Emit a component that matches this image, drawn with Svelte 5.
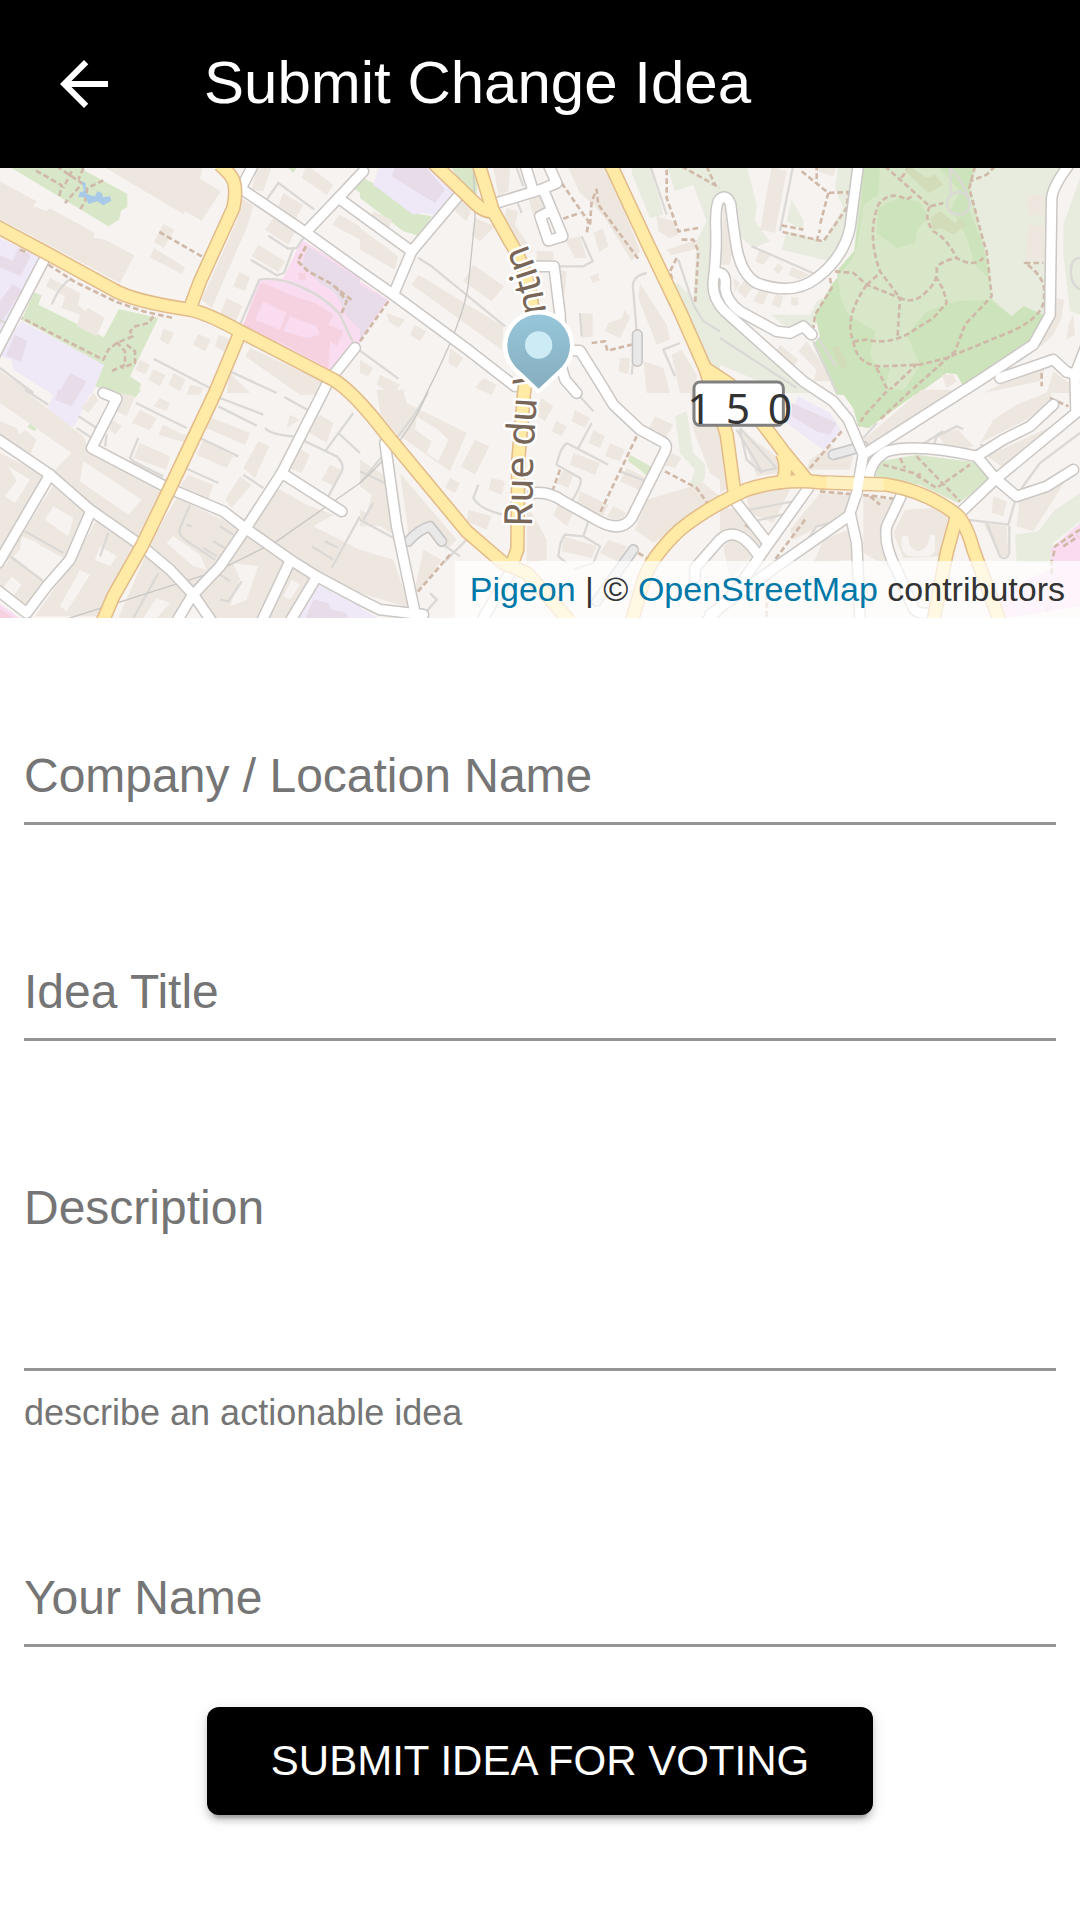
<script lang="ts">
  let company = "";
  let title = "";
  let description = "";
  let author = "";

  // the map is split in six tiles, three across and two down
  const tiles = [
    {
      x: 0,
      y: 0,
      park: "M60 -10L35 0L325 175L357 155L364 127L382 117V78L255 8L240 -10ZM102 373L125 382L115 410L312 508L357 423L475 450L390 625L424 648L410 680H360L285 655L310 590L65 455ZM855 -10L880 15L895 -10ZM1060 60L1080 45V75Z",
      wood: "",
      lawn: "",
      school: "M-5 208L125 270L0 510ZM65 460L312 590L275 680H160L40 605L35 575L0 565V540Z",
      schoolBlock: "M-5 260L38 278L55 240L92 262L62 325L-5 295ZM38 348L65 365L0 470V400ZM45 500L82 520L62 582L18 562ZM210 615L258 640L240 680H175Z",
      pink: "M905 215L1080 325V540L985 610L730 475L775 340L850 330Z",
      pinkBlock: "M790 345L880 385L945 405L1000 440L985 470L1030 490L1010 535L990 520L985 600L845 525L725 480L780 350ZM895 315h22v20h-22z",
      block: "M300 -10L550 138L555 130L605 158L662 70L600 32L610 -10ZM0 40L110 100L100 115L140 130L148 120L285 195L280 210L315 215L403 262L360 345L70 190L0 155ZM490 168L523 185L492 240L462 222ZM462 240L555 298L545 318L450 268ZM725 90L760 115L740 180L635 420L605 395L710 160ZM770 0L815 -5L790 70L755 65ZM850 75L910 112L885 155L835 115ZM825 145L888 185L865 230L795 185ZM775 230L855 280L835 312L755 265ZM718 312L750 328L735 370L700 355ZM680 390L728 415L705 465L660 440ZM920 -10L1000 50L980 80L905 30ZM1018 140L1080 175V215L998 170ZM150 330L240 375L235 410L255 430L265 420L314 450L290 505L230 475L240 440L185 420L195 385L137 355ZM490 482L522 495L505 530L480 515ZM595 498L632 515L615 550L580 530ZM655 500L705 520L690 560L645 535ZM420 575L450 590L435 620L405 605ZM460 603L497 620L480 655L445 635ZM520 615L557 635L540 670L505 650ZM570 650L610 660L600 680H560ZM750 540L980 645L960 680H900L735 565ZM690 615L750 675H680ZM0 610L80 660L90 680H0Z",
      pinkYard: "M790 400L860 435L840 485L765 455ZM870 445L950 475L960 500L920 510L850 490Z",
      service: "M800 95L835 45L943 125M805 203L865 242L890 240L910 210M752 275L830 322L852 315L880 240M720 470L778 335Q830 325 900 355Q980 390 1020 440L1060 525M0 455L15 465M155 410Q180 350 215 330M462 573L640 665M690 610L830 675M0 600L100 675",
      foot: "M108 8L185 52L178 85M170 -5L245 45L235 60L195 105M215 10L190 60M250 0L235 35M310 37L262 60L255 100L240 125M478 192L610 268M60 245L85 255M145 290L225 342L350 402L430 430L520 450M460 445L445 465L405 475L390 490L398 505L350 525L325 545L310 575L65 450M350 522L375 550V590L330 612M380 530L405 550V585L365 600M918 235L893 280L925 310L990 345L1060 400M1005 355L1040 400L1025 435",
    },
    {
      x: 1080,
      y: 0,
      park: "M0 25L95 75L155 135L215 145L180 205L130 190L0 90ZM270 -10H355L350 85L290 25Z",
      wood: "",
      lawn: "M815 -10H1080V540L1010 430L950 340L1000 400L1010 220L1040 160L1000 50L945 70L920 -10L870 -10L910 140L870 150L815 15ZM950 345L1000 390L1080 500V610L1050 590L940 360Z",
      school: "M60 -10H235L300 70L240 145L190 135L160 140L40 50Z",
      schoolBlock: "M110 -10L195 -5L255 65L225 105L95 25ZM0 350L80 395L0 515Z",
      pink: "M0 340L85 395L0 520Z",
      pinkBlock: "",
      block: "M0 180L115 265L105 305L0 245ZM40 130L95 155L85 190L30 165ZM175 320L430 475L425 545L155 350ZM340 290L432 355L395 400L310 340ZM345 150L405 175L360 220L335 200ZM300 90L340 110L320 160L285 130ZM400 -5L450 0L445 70L415 85ZM440 120L475 130L465 170L520 250L480 260L430 160ZM505 90L540 80L560 120L520 145ZM530 250H580V275L530 280ZM615 215L660 205L680 270L645 270ZM700 195L728 182L745 235L718 252ZM690 325L715 315L718 338L698 345ZM665 435L698 438V505L665 510ZM745 465L785 450L795 425L810 450L780 510L735 490ZM620 -10H740L840 250L815 280L735 150L700 110L660 75ZM840 345L920 470L930 515L890 530L835 390ZM890 145L940 160L955 200L930 210L895 190ZM920 245L1010 215L1020 240L935 262ZM780 570H810L805 620L775 610ZM850 580L910 600L930 675H860ZM935 560L965 545L1010 620V675H960ZM80 435L135 455L115 480L85 460ZM165 470L200 490L180 520L150 500ZM270 540L310 570L290 600L265 585ZM60 620L120 650L100 680L50 650ZM370 630L410 650L395 680L345 660ZM0 575L40 600L25 625L0 615ZM590 305L620 310L615 375L595 370Z",
      pinkYard: "",
      service: "M175 270L215 295L435 475M0 548L115 632M665 205L698 280L670 295H600M660 435L665 505M860 315Q810 325 820 370L830 490L815 620M960 525L910 545L945 625M870 -10L920 140M955 275L1000 410L1030 460L1080 490M470 0L490 55M465 85L485 135",
      foot: "M605 45L685 160L680 200M610 152L660 135M690 170L695 100L710 65L715 110L840 280M920 5V90L955 190L1015 180M965 215H1000L1015 250L1005 410M950 270L930 310L940 350M695 525L735 520L742 548L815 530M85 400L0 520M965 -5L1080 60M1040 -5L1065 50",
    },
    {
      x: 2160,
      y: 0,
      park: "M430 -10H770L750 60L810 300L815 390L875 445L910 415L970 440L935 530L730 655L710 618L680 615L590 680H350L280 530L300 505L285 440L335 350L400 270Z",
      wood: "M430 -10H480L475 80L430 110L410 240L350 310L365 400L385 440L465 490L450 560L470 600L510 600L490 680H350L280 530L300 505L285 440L335 350L400 270L425 100ZM545 85L600 105L625 145L590 190L585 225L530 240L470 195L475 120ZM650 -10H760L745 120L790 235L805 330L765 290L740 210L710 150L690 130L720 70ZM710 400L810 395L875 445L910 415L970 440L935 530L730 655L710 618L680 615L590 680H545L600 590L560 500L620 430Z",
      lawn: "M-5 -10H80L110 110L105 160L150 220L100 240L30 180L0 80ZM355 -10H410L385 180L330 280L185 245L200 190L310 220L370 120L345 60ZM215 95L250 155V185L200 160ZM755 -10H1050L1000 50L980 400L970 440L910 415L875 445L815 390L805 280L750 110ZM0 430L270 640L340 675H200L0 590ZM155 440L270 440L290 400L310 390L280 490L200 480ZM1080 30L1030 170V260L1050 430L1080 440Z",
      school: "",
      schoolBlock: "",
      pink: "",
      pinkBlock: "",
      block: "M155 -5L200 10L165 195L120 185ZM10 100L35 260L30 290L5 290ZM120 245L150 265L130 290L105 280ZM175 285L190 300L175 318L160 305ZM215 298L270 320L240 335L205 322ZM115 368L145 375L130 410L100 400ZM168 378L190 385L180 420L155 410ZM213 388H235V412H213ZM80 330L105 350L75 390L50 365ZM40 330L60 345L45 370ZM180 530L235 575L220 595L165 555ZM235 550L260 520L310 590L330 640L280 640L290 605ZM295 -10H350L340 25L290 10ZM920 82L972 80V142H925ZM925 170L975 172L970 285L945 275L915 285ZM1010 390L1032 395L1025 450L1000 500L970 530L940 545ZM1045 470L1060 440L1065 500L1040 515ZM665 620L700 620L710 640L680 660ZM1000 610L1055 650V675H980ZM860 640L975 600L960 640L790 675Z",
      pinkYard: "",
      service: "M220 -10L180 190M95 235L285 318M690 0L692 75M690 0Q735 45 748 100M715 72a34 34 0 1 0 1 0M1080 270Q1050 270 1053 320Q1055 350 1080 365M280 520L350 675M295 510L348 595M0 510L230 660",
      foot: "M245 10L325 75L385 72L380 120L310 220L180 190M290 -10V45M325 75L300 170M185 172L250 185M290 220L300 185M495 -5L630 115L670 105M575 85L560 95Q510 65 475 110Q440 200 480 310L540 390Q585 410 620 370Q655 340 650 300Q660 280 710 270M630 115Q610 150 640 190Q680 210 710 270Q760 300 790 270M570 -5L540 35M765 -5L748 60L790 220L800 250L815 385L735 470L705 550L560 680M825 -5L800 20L750 40M345 310L400 315L440 350L540 390L532 515M440 350L485 310M440 350Q370 450 400 520L440 515Q500 530 560 500L640 450L680 405L670 365L650 330M400 520Q410 590 480 595L600 590L680 570L850 500Q980 450 972 380Q980 330 915 285L970 285M470 600L505 670L600 580M330 330L335 360L285 440L280 480M965 615V655",
    },
    {
      x: 0,
      y: 675,
      park: "M365 -10H424L405 15L350 5ZM92 90L110 105L105 115L82 102Z",
      wood: "",
      lawn: "",
      school: "M165 -10H275L225 98L205 100L140 55ZM955 575L1080 640V680H890Z",
      schoolBlock: "M175 -10H245L215 40L165 20ZM940 620L985 630L995 650L1040 660L1045 680H915Z",
      pink: "M-5 630L65 680H-5Z",
      pinkBlock: "M-5 645L50 680H-5Z",
      block: "M0 -10H70L250 130L265 165L490 290L415 440L270 335L155 240L215 180L0 30ZM0 85L50 105L60 125L75 110L110 140L85 195L0 140ZM0 180L140 250L130 290L0 510ZM170 260L265 345L200 500L90 440L40 490L5 520ZM0 530L40 490L145 570L70 645L0 590ZM290 380L415 460L430 480L310 670H105L220 505ZM530 315L730 410L590 600L520 520L440 465ZM440 480L515 545L570 610L540 675H355ZM740 425L860 505L780 675H640L590 625ZM880 510L940 560L875 675H805ZM815 275L920 335L1000 365L940 400L1080 470V605L755 415ZM895 165L930 185L905 240L865 225ZM990 215L1022 230L1000 280L965 260ZM775 145L808 160L765 255L730 225ZM610 140L700 190L680 225L590 185ZM600 60L750 120L735 155L595 95ZM420 50L470 75L450 112L395 90ZM490 95L550 125L575 120L560 150L475 125ZM420 150L510 190L500 230L400 195ZM565 245L640 275L625 320L540 280ZM720 250L755 275L695 345L675 320ZM480 15L510 30L500 55L460 40ZM340 80L365 100L345 125L325 105ZM280 0L295 20L265 60L245 45ZM960 65L1000 90L980 150L915 110ZM870 65L900 80L860 105ZM360 0L405 10L380 70L350 55Z",
      pinkYard: "",
      yard: "M250 205L240 265L385 365L425 320ZM25 220L90 260L45 330L15 310L50 265ZM160 340L220 375L205 430L135 380ZM65 430L115 450L80 495L60 470ZM35 550L65 575L40 610L10 585ZM520 430L600 485L620 530L580 520L500 450ZM300 460L350 490L330 520L285 500ZM240 530L270 545L200 655L180 640ZM470 615L510 630L470 675H430ZM700 510L775 520L740 620L690 640L720 560ZM875 560L900 575L870 620L850 610Z",
      service: "M408 30L560 105M600 135L715 190M655 40L770 98M660 15L790 65M853 12L930 55M235 70L290 105M230 105L290 145M415 135L390 195L400 205L490 250M555 225L655 270M730 245L790 285M795 105Q810 125 880 130M905 140L1010 190Q1035 215 1025 235L985 310M1060 60L975 175M1015 120L1080 180M570 335L540 405Q535 425 555 440L645 500M660 400L700 425M640 445L690 475M610 465L650 490M935 460L1000 500M975 445L1015 465M1080 370L995 525M75 415L190 480M30 490L130 565M325 420L300 490M475 540L400 675M660 620L685 625L725 565M640 530L690 565M320 125L315 160M75 -10L145 35M560 395L575 400",
      foot: "",
    },
    {
      x: 1080,
      y: 675,
      park: "M810 185L880 225L865 255L845 235L805 205Z",
      wood: "",
      lawn: "M945 70L980 55L1000 180L1035 215V250L1020 285L990 275L1005 230L960 180Z",
      school: "M-5 640L60 680H-5Z",
      schoolBlock: "",
      pink: "",
      pinkBlock: "",
      block: "M50 -10H130L140 30L320 120L270 235L100 115L60 60ZM345 140L388 160L345 245L303 220ZM270 255L300 270L285 300L255 285ZM0 200L70 245L60 190L85 280L110 430L60 400L0 400ZM120 240L290 440L260 470L205 385L145 420ZM0 470L100 500L150 645L0 600ZM395 255L435 265L425 305L385 290ZM325 350L395 370L380 410L320 385ZM190 470L245 500L205 560L160 610ZM545 15L580 40L555 85L525 65ZM590 85L620 100L605 130L575 115ZM645 50L690 75L675 105L635 85ZM700 110L735 130L720 165L685 150ZM750 150L795 170L780 205L735 190ZM640 180L720 210L705 245L630 215ZM800 225L860 255L845 295L780 265ZM660 295L745 335L730 370L650 330ZM610 230L640 245L625 285L590 270ZM610 430L710 460L695 495L605 475ZM745 440L800 460L780 510L720 480ZM885 70L940 95L910 145L855 125ZM915 170L965 195L945 225L905 215ZM760 340L800 360L780 385L740 370ZM860 320L1030 270L1080 310L880 450L825 410ZM990 0H1080V260L1050 240L1000 110ZM500 330L560 440V500L500 510ZM600 325L645 350L620 400L580 365Z",
      pinkYard: "",
      yard: "M170 70L235 110L265 140L235 205L200 180L215 145L165 110ZM0 280L35 305L20 360L0 350Z",
      service: "M355 275L340 315Q360 350 430 365M205 -5Q170 70 0 270M0 235L75 270M40 330L10 380M0 380L110 440M320 440L255 505M695 90L655 165M620 150L745 215M620 150Q600 165 590 215L660 255Q670 270 635 325M780 235L860 265M690 370L670 430L720 460L700 510L640 530M670 430L615 425Q600 440 595 490L620 510M655 5L700 55M250 455L300 490M210 600L230 620L195 660",
      foot: "M830 130L715 370M600 230L575 300M915 235L1010 285L1045 335M270 485L170 600M835 480L860 495",
    },
    {
      x: 2160,
      y: 675,
      park: "M465 255L480 205L590 185L780 210L825 255L715 330L600 275ZM360 -10H605L445 105L415 100L400 45Z",
      wood: "M360 -10H605L445 105L415 100L400 45Z",
      lawn: "M1080 300V385L1000 450L990 510H890L885 425L955 415L1000 355Z",
      school: "M235 10L330 60L365 115L310 170L200 90Z",
      schoolBlock: "M215 30L350 90L330 125L290 115L215 70Z",
      pink: "M1080 390V640L830 680L850 590L990 530L995 465Z",
      pinkBlock: "M970 640L990 630L1000 650L980 660Z",
      block: "M605 -10H740L450 165L430 140ZM650 120L715 110L760 160L690 180ZM440 180L480 190L450 260L430 250ZM780 150L820 80L850 60L890 35L990 -5L1000 25L900 90ZM1015 90L1040 100L860 230L800 190ZM430 310L530 320L495 400L520 530L430 480ZM555 350L640 345L700 380L670 490L550 495L520 420ZM790 390L860 400L865 490L840 490ZM820 310L860 325L850 370L815 360ZM900 300L1010 250L1035 265L940 415L890 400ZM75 290L210 290L160 390L90 360ZM0 340L45 350L130 450L90 470L0 420ZM10 460L50 430L95 490L30 560ZM270 200L330 160L400 190L390 230L260 230ZM60 110L170 190L180 240L110 250ZM0 100L30 280L0 300ZM300 300L390 300L380 360L220 440L210 410ZM310 440L385 410L400 500L280 510Z",
      pinkYard: "",
      yard: "M545 430H565Q565 470 595 475Q625 470 630 425H645V470Q640 495 595 490Q550 495 545 460Z",
      service: "M50 110L125 235L170 225L60 105M60 110L80 200L125 240M90 350L220 325M100 385L210 360M640 160L650 130L710 100L730 108M590 165L670 115M800 160L780 155M740 380L865 395L895 290M800 390L840 490Q860 505 868 480V400M905 285L960 210L1080 120M430 135L470 90M245 465L290 400L330 390",
      foot: "M500 -5L440 60L415 95M570 -5L480 80M365 115L270 225M255 380L165 500M490 215L580 240L650 285L750 215M590 190L720 325M540 195L555 225M600 240L590 265M300 295L470 310L540 320M450 310L480 335M1000 490L1005 460L1080 410M1030 460L1075 430M990 15L1045 40M75 395L90 405M140 550V675M995 500V550",
    },
  ];

  const streets = [
    "M720 60L920 195L1080 310L1180 380L1410 550L1545 655",
    "M730 48L765 -20",
    "M920 190L1015 90L1090 10",
    "M1015 90L1090 145L1235 250",
    "M1370 90L1235 250L1180 380",
    "M130 280L0 530L-20 570",
    "M1065 540L985 640L965 680L845 915L735 1085L660 1195L575 1285L530 1360",
    "M310 675L350 692L275 840L500 958L670 1030L735 1080L870 1175L950 1225L1080 1295L1140 1325L1270 1340",
    "M-10 812L150 920L270 1025L420 1130L510 1205L580 1280L635 1360",
    "M150 920L-5 1185",
    "M270 1035L210 1175L140 1255L80 1335L-10 1265",
    "M845 915L1025 1030",
    "M870 1180L785 1360",
    "M945 1235L870 1360",
    "M1155 825L1190 1075L1245 1335",
    "M1530 1215L1450 1350",
    "M1600 975Q1650 970 1690 1000L1780 1050Q1860 1100 1895 1050L1995 850Q2005 830 1985 820L1920 785L1840 710L1810 660L1740 548L1715 548",
    "M1600 295H1662L1680 440L1685 600L1695 635L1730 675",
    "M1490 105L1630 62L1670 45L1645 -10",
    "M1600 70L1575 -10",
    "M1630 65L1688 205L1645 218L1620 145L1650 130",
    "M2575 -10L2550 180Q2530 270 2450 330Q2380 385 2270 345Q2225 320 2210 240Q2200 180 2192 110Q2180 75 2158 95Q2145 110 2148 190Q2150 260 2140 340Q2135 390 2175 430L2410 640L2500 700L2545 755L2590 860L2570 975L2550 1035L2570 1125L2580 1350",
    "M2160 315Q2180 320 2175 360Q2180 400 2220 430L2330 490L2370 495L2410 475L2435 500",
    "M3215 -20Q3160 50 3155 90L3150 440L3100 530L2950 630L2590 860",
    "M3000 630L3160 575L3200 612L3250 625",
    "M3260 530L3225 620L3228 735L2985 935L2880 1035",
    "M2605 950Q2605 880 2660 850Q2750 825 2930 865L2985 930L3050 985L3140 955L3220 905",
    "M2930 865L3010 815L3090 775L3160 710",
    "M2425 960L2300 1135L2210 1265L2120 1360",
    "M2210 1005L2300 1120",
    "M2545 1045L2330 1195L2130 1340",
    "M2705 980L2660 1075Q2650 1130 2690 1205L2740 1320Q2750 1340 2800 1335",
    "M2085 1230L2085 1200L2160 1115Q2210 1070 2270 1155",
  ];

  const roads = [
    "M-20 170L130 250L340 365Q400 400 570 425Q620 435 720 490L1000 635Q1060 670 1160 800L1280 945L1400 1090L1510 1185L1580 1215L1710 1360",
    "M570 420L600 340L700 120Q715 50 690 20L660 -10",
    "M720 495L645 675L510 960L425 1135L340 1285L308 1360",
    "M1300 -15L1430 110Q1450 130 1480 132L1435 -15",
    "M1480 130L1530 220Q1600 330 1600 480L1572 675L1555 875L1552 1145L1535 1190",
    "M1830 -15L1930 200L2040 430L2115 600L2145 690L2180 800L2205 985",
    "M2115 600L2190 650L2290 770L2350 850L2420 935",
    "M2345 855Q2365 890 2350 935",
    "M1895 1360L1930 1240Q1950 1170 2040 1085Q2120 1020 2240 965Q2350 930 2460 943L2660 950Q2780 970 2870 1040Q2900 1070 2920 1145L3000 1360",
    "M2870 1045L2840 1155L2800 1360",
  ];

  const rails = [
    "M1420 -10L1425 150L1405 350Q1390 460 1280 675",
    "M210 1350L610 1222L680 1195L830 1120L1080 945Q1230 810 1280 675",
  ];

  const parkings = [
    "M1912 500V580",
    "M1900 1145L1790 1300",
    "M2500 860L2590 835",
    "M1225 1120Q1255 1085 1290 1075L1325 1120",
  ];
</script>

<header class="app-bar">
  <button class="back" type="button" aria-label="Back">
    <svg viewBox="0 0 24 24" aria-hidden="true">
      <path d="M20 11H7.83l5.59-5.59L12 4l-8 8 8 8 1.41-1.41L7.83 13H20v-2z" />
    </svg>
  </button>
  <h1>Submit Change Idea</h1>
</header>

<main>
  <section class="map" aria-label="Map">
    <svg class="canvas" viewBox="0 0 3240 1350" preserveAspectRatio="xMidYMid slice">
      <defs>
        <linearGradient id="pin" x1="0" y1="0" x2="0" y2="1">
          <stop offset="0" stop-color="#97c6da" />
          <stop offset="1" stop-color="#86aebf" />
        </linearGradient>
        <path id="valentin" d="M1596 1077L1600 850L1610 700Q1648 540 1638 430Q1625 320 1550 160" />
      </defs>

      {#each tiles as tile}
        <g transform="translate({tile.x} {tile.y})">
          <path d={tile.lawn} fill="#e7ecdf" />
          <path d={tile.park} fill="#d8e7c8" />
          <path d={tile.wood} fill="#cde3bb" />
          <path d={tile.school} fill="#eee8f7" />
          <path d={tile.pink} fill="#f9dcf0" />
          <path d={tile.block} fill="#eee7e0" />
          <path d={tile.yard ?? ""} fill="#f7f3f0" />
          <path d={tile.schoolBlock} fill="#e7dce7" />
          <path d={tile.pinkBlock} fill="#f6d1df" />
          <path d={tile.pinkYard} fill="#f9dcf0" />
          <path class="service" d={tile.service} />
          <path class="foot" d={tile.foot} />
        </g>
      {/each}

      <!-- park buildings, pond and clinic wing -->
      <path fill="#d3dcb9" d="M2730 -5L2780 30L2805 20L2830 50L2785 75L2715 10ZM2790 150L2820 130L2865 165L2880 150L2900 170L2860 200L2820 180L2800 190ZM2495 540L2515 530L2545 595L2525 605Z" />
      <path fill="#a9c9e8" d="M245 40L257 45V75L270 82L285 85L292 70L305 75L310 88L330 85L334 98L310 112L292 100L265 108L257 88L235 88L240 72L252 70Z" />
      <path fill="#e7dce7" d="M925 235L1080 335V485L1040 445L1020 400L1000 370L960 345L905 290Z" />
      <path class="foot" d="M918 235L893 280L925 310L990 345L1060 400M1005 355L1040 400L1025 435" />

      {#each rails as d}
        <path class="rail" {d} />
      {/each}

      {#each parkings as d}
        <path class="parking-case" {d} />
        <path class="parking" {d} />
      {/each}

      {#each streets as d}
        <path class="street-case" {d} />
      {/each}
      {#each streets as d}
        <path class="street" {d} />
      {/each}
      {#each roads as d}
        <path class="road-case" {d} />
      {/each}
      {#each roads as d}
        <path class="road" {d} />
      {/each}
      <path class="bridge" d="M2480 943L2650 950" />
      <path class="street" d="M2578 925L2570 980" />

      <text class="street-name"><textPath href="#valentin">Rue du Valentin</textPath></text>

      <rect class="shield" x="2082" y="642" width="268" height="130" rx="18" />
      <g class="shield-text">
        <text x="2098" y="768">1</text>
        <text x="2214" y="768">5</text>
        <text x="2340" y="768">0</text>
      </g>

      <path class="pin" d="M1616 662L1547 597A94 94 0 1 1 1685 597Z" />
      <circle cx="1616" cy="531" r="41" fill="#cdebf4" />
    </svg>

    <p class="attribution">
      <a href="https://pigeon-maps.js.org/">Pigeon</a> | © <a href="https://www.openstreetmap.org/copyright">OpenStreetMap</a> contributors
    </p>
  </section>

  <form on:submit|preventDefault>
    <div class="field" class:filled={company}>
      <label for="company">Company / Location Name</label>
      <input id="company" type="text" bind:value={company} />
    </div>

    <div class="field" class:filled={title}>
      <label for="title">Idea Title</label>
      <input id="title" type="text" bind:value={title} />
    </div>

    <div class="field" class:filled={description}>
      <label for="description">Description</label>
      <textarea id="description" rows="3" aria-describedby="description-help" bind:value={description}></textarea>
      <p id="description-help">describe an actionable idea</p>
    </div>

    <div class="field" class:filled={author}>
      <label for="author">Your Name</label>
      <input id="author" type="text" bind:value={author} />
    </div>

    <button class="submit" type="submit">SUBMIT IDEA FOR VOTING</button>
  </form>
</main>

<style>
  :global(body) {
    background: #fff;
    font-family: "Liberation Sans", Helvetica, Arial, sans-serif;
  }

  .app-bar {
    display: flex;
    align-items: center;
    gap: 48px;
    min-height: 168px;
    padding: 0 48px 0 12px;
    box-sizing: border-box;
    background: #000;
    color: #fff;
  }

  .back {
    display: flex;
    padding: 36px;
    border: 0;
    border-radius: 50%;
    background: none;
    color: inherit;
    cursor: pointer;
  }

  .back svg {
    width: 72px;
    height: 72px;
    fill: currentColor;
  }

  h1 {
    margin: 0;
    font-size: 60px;
    font-weight: 400;
    line-height: 94px;
    padding-bottom: 2px;
  }

  .map {
    position: relative;
    height: 450px;
    overflow: hidden;
    background: #f7f3f0;
  }

  .canvas {
    display: block;
    width: 100%;
    height: 100%;
  }

  .canvas path {
    stroke-linejoin: round;
  }

  .service,
  .foot,
  .rail,
  .street-case,
  .street,
  .road-case,
  .road,
  .bridge,
  .parking-case,
  .parking {
    fill: none;
  }

  .service {
    stroke: #dbd9d6;
    stroke-width: 7;
  }

  .foot {
    stroke: #d0b9a8;
    stroke-width: 8;
    stroke-dasharray: 17 9;
  }

  .rail {
    stroke: #c9c7c4;
    stroke-width: 4;
  }

  .parking-case {
    stroke: #c8c7c6;
    stroke-width: 34;
    stroke-linecap: round;
  }

  .parking {
    stroke: #e9e9e9;
    stroke-width: 24;
    stroke-linecap: round;
  }

  .street-case {
    stroke: #cac7c4;
    stroke-width: 37;
    stroke-linecap: round;
  }

  .street {
    stroke: #fff;
    stroke-width: 28;
    stroke-linecap: round;
  }

  .road-case {
    stroke: #e3bb8a;
    stroke-width: 44;
  }

  .road {
    stroke: #ffeaa6;
    stroke-width: 35;
  }

  .bridge {
    stroke: #fff0bf;
    stroke-width: 35;
  }

  .street-name {
    font-family: "Noto Sans", sans-serif;
    font-size: 117px;
    fill: #786758;
    stroke: #fff;
    stroke-width: 14;
    stroke-linejoin: round;
    paint-order: stroke;
  }

  .shield {
    fill: #fff;
    stroke: #808080;
    stroke-width: 9;
  }

  .shield-text {
    font-family: "Noto Sans", sans-serif;
    font-size: 128px;
    text-anchor: middle;
    fill: #333;
  }

  .pin {
    fill: url(#pin);
    stroke: #fff;
    stroke-width: 26;
    paint-order: stroke;
  }

  .attribution {
    position: absolute;
    right: 0;
    bottom: 0;
    margin: 0;
    padding: 9px 15px;
    background: rgba(255, 255, 255, 0.7);
    color: #333;
    font-size: 34px;
    line-height: 39px;
  }

  .attribution a {
    color: #0078a8;
    text-decoration: none;
  }

  form {
    display: flex;
    flex-direction: column;
    gap: 72px;
    padding: 63px 24px 72px;
  }

  .field {
    display: grid;
    padding-top: 48px;
  }

  /* the label rests on top of the empty control */
  .field label,
  .field input,
  .field textarea {
    grid-area: 1 / 1;
  }

  .field label {
    align-self: start;
    padding-top: 23px;
    color: #757575;
    font-size: 48px;
    line-height: 48px;
    pointer-events: none;
  }

  .field:focus-within label,
  .filled label {
    margin-top: -60px;
    font-size: 36px;
  }

  .field input,
  .field textarea {
    width: 100%;
    box-sizing: border-box;
    margin: 0;
    padding: 18px 0;
    border: 0;
    border-bottom: 3px solid #949494;
    border-radius: 0;
    outline: 0;
    background: transparent;
    color: #212121;
    font: inherit;
    font-size: 48px;
    line-height: 57px;
    resize: none;
  }

  .field input {
    height: 96px;
  }

  .field p {
    margin: 24px 0 0;
    color: #757575;
    font-size: 36px;
    line-height: 36px;
  }

  .submit {
    align-self: center;
    margin-top: -12px;
    padding: 18px 64px;
    border: 0;
    border-radius: 12px;
    background: #000;
    box-shadow:
      0 9px 3px -6px rgba(0, 0, 0, 0.2),
      0 6px 6px 0 rgba(0, 0, 0, 0.14),
      0 3px 15px 0 rgba(0, 0, 0, 0.12);
    color: #fff;
    font: inherit;
    font-size: 42px;
    line-height: 72px;
    cursor: pointer;
  }
</style>
